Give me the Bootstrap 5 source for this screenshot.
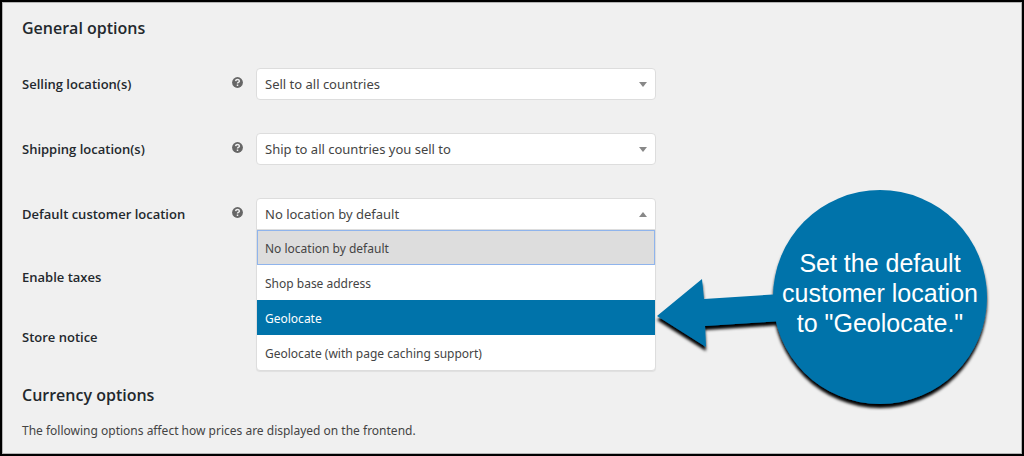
<!DOCTYPE html>
<html lang="en">
<head>
<meta charset="utf-8">
<meta name="viewport" content="width=device-width, initial-scale=1">
<title>General options</title>
<link href="https://cdn.jsdelivr.net/npm/bootstrap@5.3.0/dist/css/bootstrap.min.css" rel="stylesheet">
<style>
  body { font-family: "Noto Sans", "Open Sans", sans-serif; font-size: 12px; line-height: 18px; color: #444; background: #f0f0f0; }
  .settings { border: 2px solid #000; box-shadow: inset 0 0 0 1px #b4b4b4; padding: 14px 20px; }
  .settings h2, .option-label { font-family: "Open Sans", sans-serif; font-weight: 600; color: #23282d; }
  .settings h2 { font-size: 16px; line-height: 24px; }
  .option-label { font-size: 13px; line-height: 24px; }
  .option-head { flex: 0 0 234px; padding-right: 13px; }
  .option-rows { padding-top: 28px; gap: 33px; }
  .plain-rows { padding: 35px 0 34px; gap: 36px; }
  .intro { margin-top: 15px; }
  .tip { width: 11px; height: 11px; margin-bottom: 3px; }
  .tip svg { display: block; }
  .field { flex: 0 1 400px; }
  .field .form-select {
    height: 32px; padding: 1px 28px 0 8px; font-size: 13px; line-height: 29px; color: #444;
    border-color: #ddd; border-radius: 4px; background-color: #fff;
    background-image: url("data:image/svg+xml,%3Csvg xmlns='http://www.w3.org/2000/svg' viewBox='0 0 8 5'%3E%3Cpath fill='%23888' d='M0 0h8L4 5z'/%3E%3C/svg%3E");
    background-size: 8px 5px; background-position: right 8px center;
  }
  .field .form-select.is-open {
    border-radius: 4px 4px 0 0;
    background-image: url("data:image/svg+xml,%3Csvg xmlns='http://www.w3.org/2000/svg' viewBox='0 0 8 5'%3E%3Cpath fill='%23888' d='M0 5h8L4 0z'/%3E%3C/svg%3E");
  }
  .choices { top: 100%; margin-top: -1px; z-index: 2; border: 1px solid #ddd; border-radius: 0 0 4px 4px; background: #fff; box-shadow: 0 1px 1px #0001; }
  .choices button { height: 35px; padding: 2px 7px 0; border: 1px solid transparent; background: transparent; color: #444; }
  .choices .current { background: #ddd; border-color: #8fb4ec; }
  .choices .hovered { background: #0073aa; color: #fff; }
  .callout { left: 100%; top: -9px; width: 336px; height: 222px; z-index: 3; pointer-events: none; }
  .callout p { left: 117px; width: 214px; height: 208px; font: 25px/30px "Liberation Sans", Arial, sans-serif; color: #fff; }
</style>
</head>
<body>
<main class="settings">
  <h2 class="m-0">General options</h2>
  <form>
    <div class="option-rows d-flex flex-column">
      <div class="d-flex align-items-center">
        <div class="option-head d-flex align-items-center justify-content-between">
          <label class="option-label" for="selling">Selling location(s)</label>
          <button type="button" class="tip btn p-0 border-0" aria-label="Help: selling locations"><svg width="11" height="11" viewBox="0 0 11 11"><circle cx="5.5" cy="5.5" r="5.4" fill="#666"/><path d="M3.6 4.2Q3.8 2.5 5.5 2.5T7.4 4Q7.4 4.9 6.3 5.4 5.5 5.8 5.5 6.6M5.5 7.6V9.1" fill="none" stroke="#f0f0f0" stroke-width="1.5"/></svg></button>
        </div>
        <div class="field">
          <select id="selling" class="form-select"><option>Sell to all countries</option></select>
        </div>
      </div>
      <div class="d-flex align-items-center">
        <div class="option-head d-flex align-items-center justify-content-between">
          <label class="option-label" for="shipping">Shipping location(s)</label>
          <button type="button" class="tip btn p-0 border-0" aria-label="Help: shipping locations"><svg width="11" height="11" viewBox="0 0 11 11"><circle cx="5.5" cy="5.5" r="5.4" fill="#666"/><path d="M3.6 4.2Q3.8 2.5 5.5 2.5T7.4 4Q7.4 4.9 6.3 5.4 5.5 5.8 5.5 6.6M5.5 7.6V9.1" fill="none" stroke="#f0f0f0" stroke-width="1.5"/></svg></button>
        </div>
        <div class="field">
          <select id="shipping" class="form-select"><option>Ship to all countries you sell to</option></select>
        </div>
      </div>
      <div class="d-flex align-items-center">
        <div class="option-head d-flex align-items-center justify-content-between">
          <label class="option-label" for="customer">Default customer location</label>
          <button type="button" class="tip btn p-0 border-0" aria-label="Help: default customer location"><svg width="11" height="11" viewBox="0 0 11 11"><circle cx="5.5" cy="5.5" r="5.4" fill="#666"/><path d="M3.6 4.2Q3.8 2.5 5.5 2.5T7.4 4Q7.4 4.9 6.3 5.4 5.5 5.8 5.5 6.6M5.5 7.6V9.1" fill="none" stroke="#f0f0f0" stroke-width="1.5"/></svg></button>
        </div>
        <div class="field position-relative">
          <select id="customer" class="form-select is-open"><option>No location by default</option></select>
          <div class="choices position-absolute start-0 w-100 d-flex flex-column" role="listbox" aria-label="Default customer location">
            <button type="button" role="option" aria-selected="true" class="current text-start">No location by default</button>
            <button type="button" role="option" aria-selected="false" class="text-start">Shop base address</button>
            <button type="button" role="option" aria-selected="false" class="hovered text-start">Geolocate</button>
            <button type="button" role="option" aria-selected="false" class="text-start">Geolocate (with page caching support)</button>
          </div>
          <div class="callout position-absolute">
            <svg class="position-absolute overflow-visible" width="336" height="222" viewBox="0 0 336 222" aria-hidden="true">
              <defs><filter id="shade" x="-5%" y="-5%" width="112%" height="115%"><feDropShadow dx="0" dy="4" stdDeviation="1.6" flood-color="#000" flood-opacity="1"/></filter></defs>
              <g filter="url(#shade)" fill="#0073aa"><circle cx="224" cy="108" r="107"/><path d="M1 127 46 90 48 110 125 105V132L49 137 50 158Z"/></g>
            </svg>
            <p class="position-absolute d-flex align-items-center justify-content-center text-center m-0">Set the default<br>customer location<br>to "Geolocate."</p>
          </div>
        </div>
      </div>
    </div>
    <div class="plain-rows d-flex flex-column">
      <div class="option-label">Enable taxes</div>
      <div class="option-label">Store notice</div>
    </div>
  </form>
  <h2 class="m-0">Currency options</h2>
  <p class="intro mb-0">The following options affect how prices are displayed on the frontend.</p>
</main>
<script src="https://cdn.jsdelivr.net/npm/bootstrap@5.3.0/dist/js/bootstrap.bundle.min.js"></script>
</body>
</html>
